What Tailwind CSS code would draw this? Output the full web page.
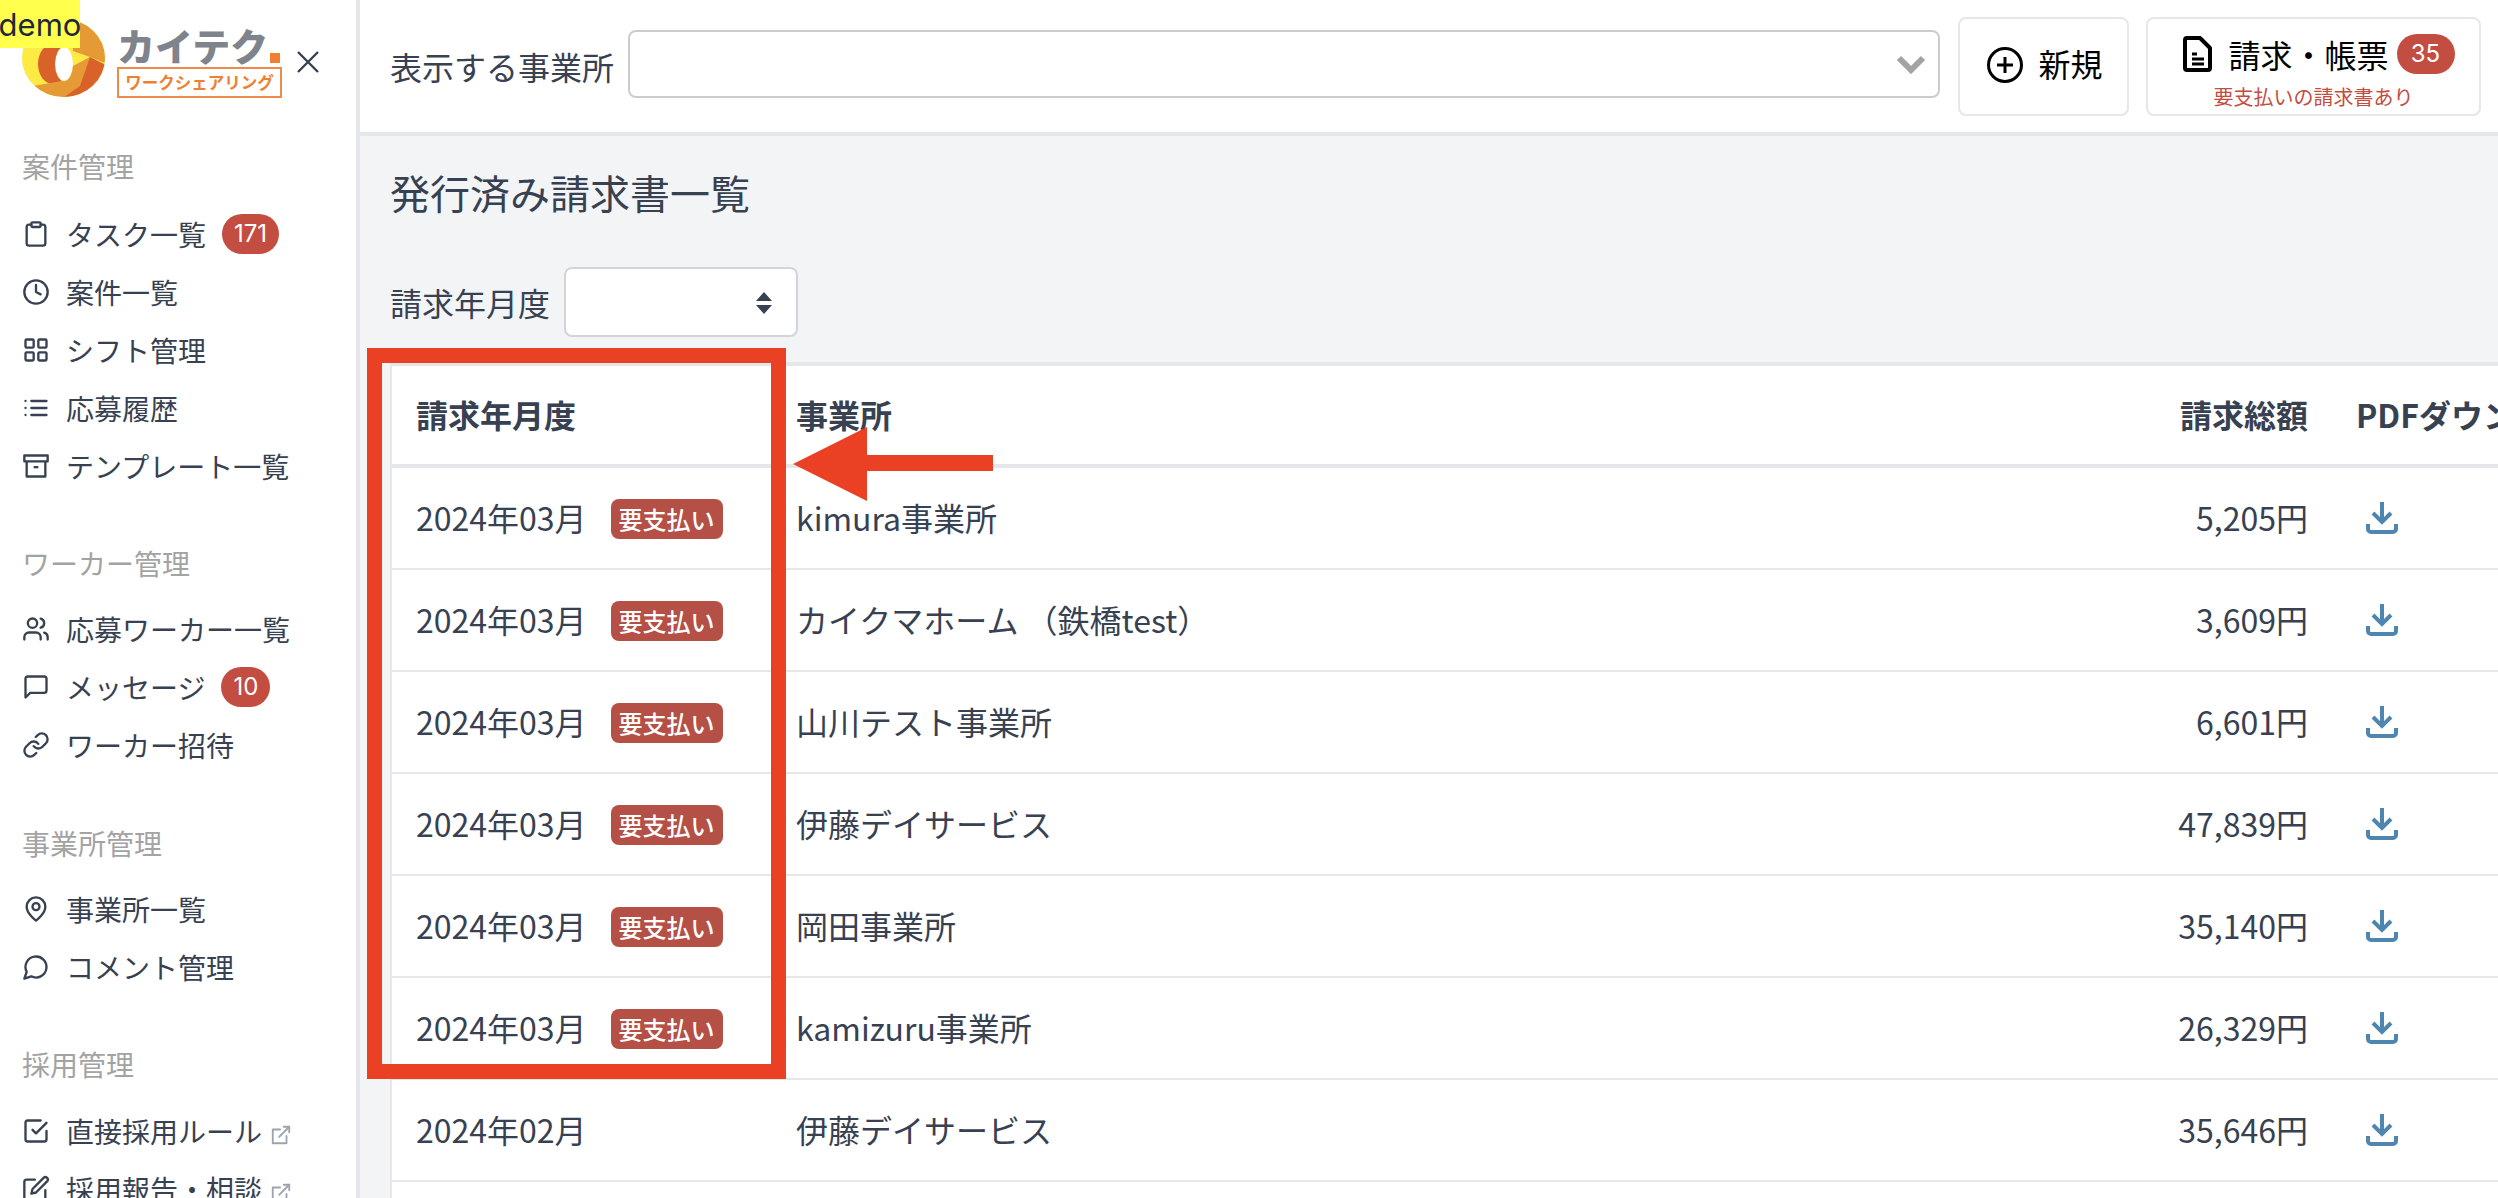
<!DOCTYPE html>
<html lang="ja">
<head>
<meta charset="utf-8">
<script src="https://cdn.jsdelivr.net/npm/@tailwindcss/browser@4"></script>
<title>発行済み請求書一覧</title>
</head>
<body>
<div class="relative flex h-[1198px] w-[2498px] overflow-hidden bg-white font-['Noto_Sans_CJK_JP','Noto_Sans',sans-serif] text-[#374151]">

  <!-- demo tag -->
  <div class="absolute left-0 top-0 z-20 flex h-[48px] w-[80px] items-center justify-center bg-[#ffff4d] font-['Inter',sans-serif] text-[31px] leading-none text-[#1f2937]">demo</div>

  <!-- sidebar -->
  <aside class="w-[360px] shrink-0 overflow-hidden border-r-4 border-[#e5e7eb] bg-white">
    <div class="relative flex h-[146px] items-start pl-[22px] pt-[19px]">
      <svg width="84" height="80" viewBox="22 19 84 80" class="shrink-0">
        <defs>
          <clipPath id="ring"><path clip-rule="evenodd" d="M22 58a41.5 39 0 1 0 83 0a41.5 39 0 1 0 -83 0Z M55 64a9 17 0 1 0 18 0a9 17 0 1 0 -18 0Z"/></clipPath>
        </defs>
        <g clip-path="url(#ring)">
          <rect x="20" y="15" width="90" height="90" fill="#fdea45"/>
          <ellipse cx="53" cy="64" rx="15" ry="20" fill="#d9622b"/>
          <polygon points="50,15 110,15 110,65 90,57 73,51 72,38" fill="#e59a35"/>
          <polygon points="33,86 62,81 73,66 90,57 94,105 33,105" fill="#e59a35"/>
          <polygon points="63,98 80,86 90,57 106,65 106,100" fill="#d9622b"/>
        </g>
      </svg>
      <div class="ml-[11px] w-[165px] shrink-0">
        <div class="flex h-[48px] items-end">
          <span class="h-[44px] text-[38px] leading-[44px] font-black text-[#7f848c]">カイテク</span>
          <span class="mb-[4px] ml-[2px] h-[10px] w-[10px] bg-[#f08030]"></span>
        </div>
        <div class="flex h-[31px] items-center justify-center border-2 border-[#f08a4a] text-[16.5px] leading-none font-bold text-[#f07f30]">ワークシェアリング</div>
      </div>
      <svg class="absolute left-[296px] top-[50px]" width="24" height="24" viewBox="0 0 24 24" fill="none" stroke="#374151" stroke-width="2.4"><path d="M2 2l20 20M22 2L2 22"/></svg>
    </div>

    <div class="flex h-[40px] items-center pl-[22px] text-[28px] text-[#a3a3a3]">案件管理</div>
    <ul class="mt-[19px]">
      <li class="flex h-[58px] items-center pl-[22px] text-[28px]">
        <svg class="mr-[16px] shrink-0" width="28" height="28" viewBox="0 0 24 24" fill="none" stroke="#374151" stroke-width="2" stroke-linecap="round" stroke-linejoin="round"><rect x="8" y="2" width="8" height="4" rx="1"/><path d="M16 4h2a2 2 0 0 1 2 2v14a2 2 0 0 1-2 2H6a2 2 0 0 1-2-2V6a2 2 0 0 1 2-2h2"/></svg>
        <span>タスク一覧</span>
        <span class="ml-[16px] flex h-[40px] w-[57px] items-center justify-center rounded-full bg-[#c44d41] font-['Inter',sans-serif] text-[24px] text-white">171</span>
      </li>
      <li class="flex h-[58px] items-center pl-[22px] text-[28px]">
        <svg class="mr-[16px] shrink-0" width="28" height="28" viewBox="0 0 24 24" fill="none" stroke="#374151" stroke-width="2" stroke-linecap="round" stroke-linejoin="round"><circle cx="12" cy="12" r="10"/><path d="M12 6v6l4 2"/></svg>
        <span>案件一覧</span>
      </li>
      <li class="flex h-[58px] items-center pl-[22px] text-[28px]">
        <svg class="mr-[16px] shrink-0" width="28" height="28" viewBox="0 0 24 24" fill="none" stroke="#374151" stroke-width="2" stroke-linecap="round" stroke-linejoin="round"><rect x="3" y="3" width="7" height="7" rx="1"/><rect x="14" y="3" width="7" height="7" rx="1"/><rect x="14" y="14" width="7" height="7" rx="1"/><rect x="3" y="14" width="7" height="7" rx="1"/></svg>
        <span>シフト管理</span>
      </li>
      <li class="flex h-[58px] items-center pl-[22px] text-[28px]">
        <svg class="mr-[16px] shrink-0" width="28" height="28" viewBox="0 0 24 24" fill="none" stroke="#374151" stroke-width="2" stroke-linecap="round" stroke-linejoin="round"><path d="M8 6h13M8 12h13M8 18h13M3 6h.01M3 12h.01M3 18h.01"/></svg>
        <span>応募履歴</span>
      </li>
      <li class="flex h-[58px] items-center pl-[22px] text-[28px]">
        <svg class="mr-[16px] shrink-0" width="28" height="28" viewBox="0 0 24 24" fill="none" stroke="#374151" stroke-width="2" stroke-linejoin="round"><path d="M2 3h20v5H2z"/><path d="M4 8v13h16V8"/><path d="M10 13h4"/></svg>
        <span>テンプレート一覧</span>
      </li>
    </ul>

    <div class="mt-[48px] flex h-[40px] items-center pl-[22px] text-[28px] text-[#a3a3a3]">ワーカー管理</div>
    <ul class="mt-[17px]">
      <li class="flex h-[58px] items-center pl-[22px] text-[28px]">
        <svg class="mr-[16px] shrink-0" width="28" height="28" viewBox="0 0 24 24" fill="none" stroke="#374151" stroke-width="2" stroke-linecap="round" stroke-linejoin="round"><path d="M16 21v-2a4 4 0 0 0-4-4H6a4 4 0 0 0-4 4v2"/><circle cx="9" cy="7" r="4"/><path d="M22 21v-2a4 4 0 0 0-3-3.87"/><path d="M16 3.13a4 4 0 0 1 0 7.75"/></svg>
        <span>応募ワーカー一覧</span>
      </li>
      <li class="flex h-[58px] items-center pl-[22px] text-[28px]">
        <svg class="mr-[16px] shrink-0" width="28" height="28" viewBox="0 0 24 24" fill="none" stroke="#374151" stroke-width="2" stroke-linecap="round" stroke-linejoin="round"><path d="M21 15a2 2 0 0 1-2 2H7l-4 4V5a2 2 0 0 1 2-2h14a2 2 0 0 1 2 2z"/></svg>
        <span>メッセージ</span>
        <span class="ml-[16px] flex h-[40px] w-[49px] items-center justify-center rounded-full bg-[#c44d41] font-['Inter',sans-serif] text-[24px] text-white">10</span>
      </li>
      <li class="flex h-[58px] items-center pl-[22px] text-[28px]">
        <svg class="mr-[16px] shrink-0" width="28" height="28" viewBox="0 0 24 24" fill="none" stroke="#374151" stroke-width="2" stroke-linecap="round" stroke-linejoin="round"><path d="M10 13a5 5 0 0 0 7.54.54l3-3a5 5 0 0 0-7.07-7.07l-1.72 1.71"/><path d="M14 11a5 5 0 0 0-7.54-.54l-3 3a5 5 0 0 0 7.07 7.07l1.71-1.71"/></svg>
        <span>ワーカー招待</span>
      </li>
    </ul>

    <div class="mt-[49px] flex h-[40px] items-center pl-[22px] text-[28px] text-[#a3a3a3]">事業所管理</div>
    <ul class="mt-[17px]">
      <li class="flex h-[58px] items-center pl-[22px] text-[28px]">
        <svg class="mr-[16px] shrink-0" width="28" height="28" viewBox="0 0 24 24" fill="none" stroke="#374151" stroke-width="2" stroke-linecap="round" stroke-linejoin="round"><path d="M20 10c0 6-8 12-8 12s-8-6-8-12a8 8 0 0 1 16 0Z"/><circle cx="12" cy="10" r="3"/></svg>
        <span>事業所一覧</span>
      </li>
      <li class="flex h-[58px] items-center pl-[22px] text-[28px]">
        <svg class="mr-[16px] shrink-0" width="28" height="28" viewBox="0 0 24 24" fill="none" stroke="#374151" stroke-width="2" stroke-linecap="round" stroke-linejoin="round"><path d="M7.9 20A9 9 0 1 0 4 16.1L2 22Z"/></svg>
        <span>コメント管理</span>
      </li>
    </ul>

    <div class="mt-[48px] flex h-[40px] items-center pl-[22px] text-[28px] text-[#a3a3a3]">採用管理</div>
    <ul class="mt-[18px]">
      <li class="flex h-[58px] items-center pl-[22px] text-[28px]">
        <svg class="mr-[16px] shrink-0" width="28" height="28" viewBox="0 0 24 24" fill="none" stroke="#374151" stroke-width="2" stroke-linecap="round" stroke-linejoin="round"><path d="M9 11l3 3L21 5"/><path d="M21 12v7a2 2 0 0 1-2 2H5a2 2 0 0 1-2-2V5a2 2 0 0 1 2-2h11"/></svg>
        <span>直接採用ルール</span>
        <svg class="ml-[8px] mt-[8px] shrink-0" width="22" height="22" viewBox="0 0 24 24" fill="none" stroke="#9ca3af" stroke-width="2" stroke-linecap="round" stroke-linejoin="round"><path d="M18 13v8H3V6h8"/><path d="M15 3h6v6"/><path d="M10 14L21 3"/></svg>
      </li>
      <li class="flex h-[58px] items-center pl-[22px] text-[28px]">
        <svg class="mr-[16px] shrink-0" width="28" height="28" viewBox="0 0 24 24" fill="none" stroke="#374151" stroke-width="2" stroke-linecap="round" stroke-linejoin="round"><path d="M11 4H4a2 2 0 0 0-2 2v14a2 2 0 0 0 2 2h14a2 2 0 0 0 2-2v-7"/><path d="M18.5 2.5a2.121 2.121 0 0 1 3 3L12 15l-4 1 1-4 9.5-9.5z"/></svg>
        <span>採用報告・相談</span>
        <svg class="ml-[8px] mt-[8px] shrink-0" width="22" height="22" viewBox="0 0 24 24" fill="none" stroke="#9ca3af" stroke-width="2" stroke-linecap="round" stroke-linejoin="round"><path d="M18 13v8H3V6h8"/><path d="M15 3h6v6"/><path d="M10 14L21 3"/></svg>
      </li>
    </ul>
  </aside>

  <!-- main column -->
  <div class="min-w-0 flex-1 overflow-hidden bg-[#f3f4f6]">
    <header class="flex h-[136px] items-center border-b-4 border-[#e5e7eb] bg-white pl-[30px] pr-[17px]">
      <span class="text-[32px] leading-none">表示する事業所</span>
      <div class="relative mb-[4px] ml-[14px] h-[68px] flex-1 rounded-[8px] border-2 border-[#cccccc] bg-white">
        <svg class="absolute right-[12px] top-[22px]" width="30" height="20" viewBox="0 0 30 20" fill="none" stroke="#a3a3a3" stroke-width="6"><path d="M3 4l12 12L27 4"/></svg>
      </div>
      <div class="ml-[18px] flex h-[99px] w-[171px] items-center justify-center rounded-[8px] border-2 border-[#e5e7eb] bg-white pb-[3px] pl-[3px] text-[32px] leading-none text-black">
        <svg class="mr-[15px]" width="36" height="36" viewBox="0 0 36 36" fill="none" stroke="#000" stroke-width="3"><circle cx="18" cy="18" r="16.5"/><path d="M18 10v16M10 18h16"/></svg>
        <span class="pb-[3px]">新規</span>
      </div>
      <div class="ml-[17px] flex h-[99px] w-[335px] flex-col items-center justify-start rounded-[8px] border-2 border-[#e5e7eb] bg-white pt-[13px]">
        <div class="ml-[11px] flex h-[44px] items-center text-[32px] leading-none text-black">
          <svg class="mr-[16px]" width="29" height="36" viewBox="0 0 29 36" fill="none" stroke="#000" stroke-width="4" stroke-linejoin="round"><path d="M4 2h13l10 10v20a2 2 0 0 1-2 2H4a2 2 0 0 1-2-2V4a2 2 0 0 1 2-2z"/><path d="M9 18h5M9 23h12M9 28h12" stroke-width="3"/></svg>
          <span>請求・帳票</span>
          <span class="ml-[8px] flex h-[40px] w-[58px] items-center justify-center rounded-full bg-[#c44d41] font-['Inter',sans-serif] text-[24px] text-white">35</span>
        </div>
        <div class="mt-[9px] text-[20px] leading-[24px] text-[#c44d41]">要支払いの請求書あり</div>
      </div>
    </header>

    <main class="pl-[30px]">
      <h1 class="flex h-[114px] items-center pb-[3px] text-[40px] leading-none font-normal">発行済み請求書一覧</h1>
      <div class="mt-[17px] flex h-[70px] items-center">
        <span class="text-[32px] leading-none">請求年月度</span>
        <div class="relative ml-[14px] h-[70px] w-[234px] rounded-[8px] border-2 border-[#d1d5db] bg-white">
          <svg class="absolute right-[24px] top-[23px]" width="16" height="22" viewBox="0 0 16 22" fill="#374151"><path d="M8 0l8 9H0zM8 22l8-9H0z"/></svg>
        </div>
      </div>

      <div class="mt-[25px] w-[2400px] border-l-2 border-t-4 border-[#e5e7eb] bg-white">
        <table class="w-full table-fixed border-separate border-spacing-0 text-left text-[32px]">
          <colgroup><col class="w-[380px]"><col class="w-[1379px]"><col class="w-[181px]"><col class="w-[458px]"></colgroup>
          <thead>
            <tr class="h-[102px] font-bold">
              <th class="border-b-4 border-[#e5e7eb] pb-[3px] pl-[24px]">請求年月度</th>
              <th class="border-b-4 border-[#e5e7eb] pb-[3px] pl-[24px]">事業所</th>
              <th class="border-b-4 border-[#e5e7eb] pb-[3px] pr-[24px] text-right">請求総額</th>
              <th class="whitespace-nowrap border-b-4 border-[#e5e7eb] pb-[3px] pl-[24px]">PDFダウンロード</th>
            </tr>
          </thead>
          <tbody>
            <tr class="h-[102px]"><td class="border-b-2 border-[#e5e7eb] pb-[3px] pl-[24px]"><div class="flex items-center"><span>2024年03月</span><span class="ml-[24px] mt-[5px] flex h-[40px] w-[112px] items-center justify-center rounded-[8px] bg-[#b55046] text-[24px] font-medium text-white">要支払い</span></div></td><td class="border-b-2 border-[#e5e7eb] pb-[3px] pl-[24px]">kimura事業所</td><td class="border-b-2 border-[#e5e7eb] pb-[3px] pr-[24px] text-right">5,205円</td><td class="border-b-2 border-[#e5e7eb] pl-[34px]"><svg width="32" height="32" viewBox="0 0 32 32" fill="none" stroke="#4f86b0" stroke-width="4"><path d="M16 0v21M7 11l9 9 9-9M2 22v5a3 3 0 0 0 3 3h22a3 3 0 0 0 3-3v-5"/></svg></td></tr>
            <tr class="h-[102px]"><td class="border-b-2 border-[#e5e7eb] pb-[3px] pl-[24px]"><div class="flex items-center"><span>2024年03月</span><span class="ml-[24px] mt-[5px] flex h-[40px] w-[112px] items-center justify-center rounded-[8px] bg-[#b55046] text-[24px] font-medium text-white">要支払い</span></div></td><td class="border-b-2 border-[#e5e7eb] pb-[3px] pl-[24px]">カイクマホーム （鉄橋test）</td><td class="border-b-2 border-[#e5e7eb] pb-[3px] pr-[24px] text-right">3,609円</td><td class="border-b-2 border-[#e5e7eb] pl-[34px]"><svg width="32" height="32" viewBox="0 0 32 32" fill="none" stroke="#4f86b0" stroke-width="4"><path d="M16 0v21M7 11l9 9 9-9M2 22v5a3 3 0 0 0 3 3h22a3 3 0 0 0 3-3v-5"/></svg></td></tr>
            <tr class="h-[102px]"><td class="border-b-2 border-[#e5e7eb] pb-[3px] pl-[24px]"><div class="flex items-center"><span>2024年03月</span><span class="ml-[24px] mt-[5px] flex h-[40px] w-[112px] items-center justify-center rounded-[8px] bg-[#b55046] text-[24px] font-medium text-white">要支払い</span></div></td><td class="border-b-2 border-[#e5e7eb] pb-[3px] pl-[24px]">山川テスト事業所</td><td class="border-b-2 border-[#e5e7eb] pb-[3px] pr-[24px] text-right">6,601円</td><td class="border-b-2 border-[#e5e7eb] pl-[34px]"><svg width="32" height="32" viewBox="0 0 32 32" fill="none" stroke="#4f86b0" stroke-width="4"><path d="M16 0v21M7 11l9 9 9-9M2 22v5a3 3 0 0 0 3 3h22a3 3 0 0 0 3-3v-5"/></svg></td></tr>
            <tr class="h-[102px]"><td class="border-b-2 border-[#e5e7eb] pb-[3px] pl-[24px]"><div class="flex items-center"><span>2024年03月</span><span class="ml-[24px] mt-[5px] flex h-[40px] w-[112px] items-center justify-center rounded-[8px] bg-[#b55046] text-[24px] font-medium text-white">要支払い</span></div></td><td class="border-b-2 border-[#e5e7eb] pb-[3px] pl-[24px]">伊藤デイサービス</td><td class="border-b-2 border-[#e5e7eb] pb-[3px] pr-[24px] text-right">47,839円</td><td class="border-b-2 border-[#e5e7eb] pl-[34px]"><svg width="32" height="32" viewBox="0 0 32 32" fill="none" stroke="#4f86b0" stroke-width="4"><path d="M16 0v21M7 11l9 9 9-9M2 22v5a3 3 0 0 0 3 3h22a3 3 0 0 0 3-3v-5"/></svg></td></tr>
            <tr class="h-[102px]"><td class="border-b-2 border-[#e5e7eb] pb-[3px] pl-[24px]"><div class="flex items-center"><span>2024年03月</span><span class="ml-[24px] mt-[5px] flex h-[40px] w-[112px] items-center justify-center rounded-[8px] bg-[#b55046] text-[24px] font-medium text-white">要支払い</span></div></td><td class="border-b-2 border-[#e5e7eb] pb-[3px] pl-[24px]">岡田事業所</td><td class="border-b-2 border-[#e5e7eb] pb-[3px] pr-[24px] text-right">35,140円</td><td class="border-b-2 border-[#e5e7eb] pl-[34px]"><svg width="32" height="32" viewBox="0 0 32 32" fill="none" stroke="#4f86b0" stroke-width="4"><path d="M16 0v21M7 11l9 9 9-9M2 22v5a3 3 0 0 0 3 3h22a3 3 0 0 0 3-3v-5"/></svg></td></tr>
            <tr class="h-[102px]"><td class="border-b-2 border-[#e5e7eb] pb-[3px] pl-[24px]"><div class="flex items-center"><span>2024年03月</span><span class="ml-[24px] mt-[5px] flex h-[40px] w-[112px] items-center justify-center rounded-[8px] bg-[#b55046] text-[24px] font-medium text-white">要支払い</span></div></td><td class="border-b-2 border-[#e5e7eb] pb-[3px] pl-[24px]">kamizuru事業所</td><td class="border-b-2 border-[#e5e7eb] pb-[3px] pr-[24px] text-right">26,329円</td><td class="border-b-2 border-[#e5e7eb] pl-[34px]"><svg width="32" height="32" viewBox="0 0 32 32" fill="none" stroke="#4f86b0" stroke-width="4"><path d="M16 0v21M7 11l9 9 9-9M2 22v5a3 3 0 0 0 3 3h22a3 3 0 0 0 3-3v-5"/></svg></td></tr>
            <tr class="h-[102px]"><td class="border-b-2 border-[#e5e7eb] pb-[3px] pl-[24px]">2024年02月</td><td class="border-b-2 border-[#e5e7eb] pb-[3px] pl-[24px]">伊藤デイサービス</td><td class="border-b-2 border-[#e5e7eb] pb-[3px] pr-[24px] text-right">35,646円</td><td class="border-b-2 border-[#e5e7eb] pl-[34px]"><svg width="32" height="32" viewBox="0 0 32 32" fill="none" stroke="#4f86b0" stroke-width="4"><path d="M16 0v21M7 11l9 9 9-9M2 22v5a3 3 0 0 0 3 3h22a3 3 0 0 0 3-3v-5"/></svg></td></tr>
            <tr class="h-[102px]"><td></td><td></td><td></td><td></td></tr>
          </tbody>
        </table>
      </div>
    </main>
  </div>

  <!-- red annotation -->
  <div class="pointer-events-none absolute left-[367px] top-[348px] z-10 h-[731px] w-[419px] border-[15px] border-[#ea4024]"></div>
  <svg class="pointer-events-none absolute left-[793px] top-[427px] z-10" width="200" height="74" viewBox="0 0 200 74" fill="#ea4024"><path d="M0 37L74 0V28H200V44H74V74Z"/></svg>
</div>
</body>
</html>
